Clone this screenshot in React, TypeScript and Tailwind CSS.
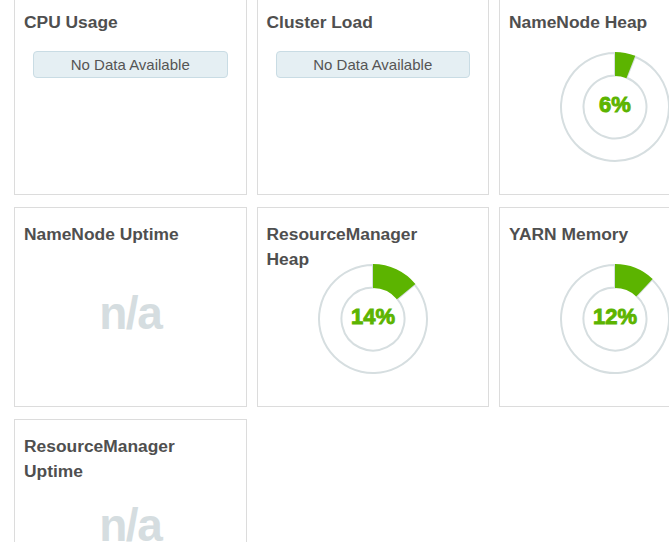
import React from 'react';

type Widget =
  | { title: string; kind: 'nodata' }
  | { title: string; kind: 'donut'; percent: number }
  | { title: string; kind: 'na' };

const widgets: Widget[] = [
  { title: 'CPU Usage', kind: 'nodata' },
  { title: 'Cluster Load', kind: 'nodata' },
  { title: 'NameNode Heap', kind: 'donut', percent: 6 },
  { title: 'NameNode Uptime', kind: 'na' },
  { title: 'ResourceManager Heap', kind: 'donut', percent: 14 },
  { title: 'YARN Memory', kind: 'donut', percent: 12 },
  { title: 'ResourceManager Uptime', kind: 'na' },
];

// ring segment between two radii, angles in degrees clockwise from 12 o'clock
function arcPath(cx: number, cy: number, r0: number, r1: number, a0: number, a1: number) {
  const p = (r: number, a: number) => {
    const rad = ((a - 90) * Math.PI) / 180;
    return `${cx + r * Math.cos(rad)} ${cy + r * Math.sin(rad)}`;
  };
  const large = a1 - a0 > 180 ? 1 : 0;
  return `M ${p(r1, a0)} A ${r1} ${r1} 0 ${large} 1 ${p(r1, a1)} L ${p(r0, a1)} A ${r0} ${r0} 0 ${large} 0 ${p(r0, a0)} Z`;
}

function Donut({ percent }: { percent: number }) {
  const cx = 56;
  const cy = 56;
  const end = (percent / 100) * 360;
  return (
    <svg width="112" height="112" viewBox="0 0 112 112">
      <path d={arcPath(cx, cy, 31.5, 54, end, 359.99)} fill="#fff" stroke="#d6dee0" strokeWidth="2" />
      <path d={arcPath(cx, cy, 31, 55, 0, end)} fill="#5cb400" />
      <text
        x={cx}
        y={cy + 4.5}
        textAnchor="middle"
        fontFamily="'Liberation Sans', Arial, sans-serif"
        fontWeight="bold"
        fontSize="22"
        fill="#5cb400"
        stroke="#5cb400"
        strokeWidth="0.9"
      >
        {percent}%
      </text>
    </svg>
  );
}

function Card({ w }: { w: Widget }) {
  return (
    <div className="h-[200px] border border-[#dcdcdc] bg-white overflow-hidden">
      <div className="h-[40px] pt-[14px] pl-[9px] pr-[40px] text-[17.4px] leading-[25px] font-bold text-[#4f4f4f]">
        {w.title}
      </div>
      {w.kind === 'nodata' && (
        <div className="mx-[18px] mt-[15px] h-[27px] rounded-[4px] border border-[#c9dce4] bg-[#e5eff3] text-center text-[15px] leading-[25px] text-[#555]">
          No Data Available
        </div>
      )}
      {w.kind === 'donut' && (
        <div className="mt-[15px] flex justify-center">
          <Donut percent={w.percent} />
        </div>
      )}
      {w.kind === 'na' && (
        <div className="mt-[42px] text-center text-[46px] leading-[46px] font-bold tracking-[-1.5px] text-[#d5dde0]">
          n/a
        </div>
      )}
    </div>
  );
}

export default function App() {
  return (
    <div className="w-[669px] h-[542px] overflow-hidden bg-white font-['Liberation_Sans',Arial,sans-serif]">
      <div className="mt-[-5px] pl-[14px] grid grid-cols-[repeat(3,232.5px)] gap-x-[10px] gap-y-[12px]">
        {widgets.map((w) => (
          <Card key={w.title} w={w} />
        ))}
      </div>
    </div>
  );
}
